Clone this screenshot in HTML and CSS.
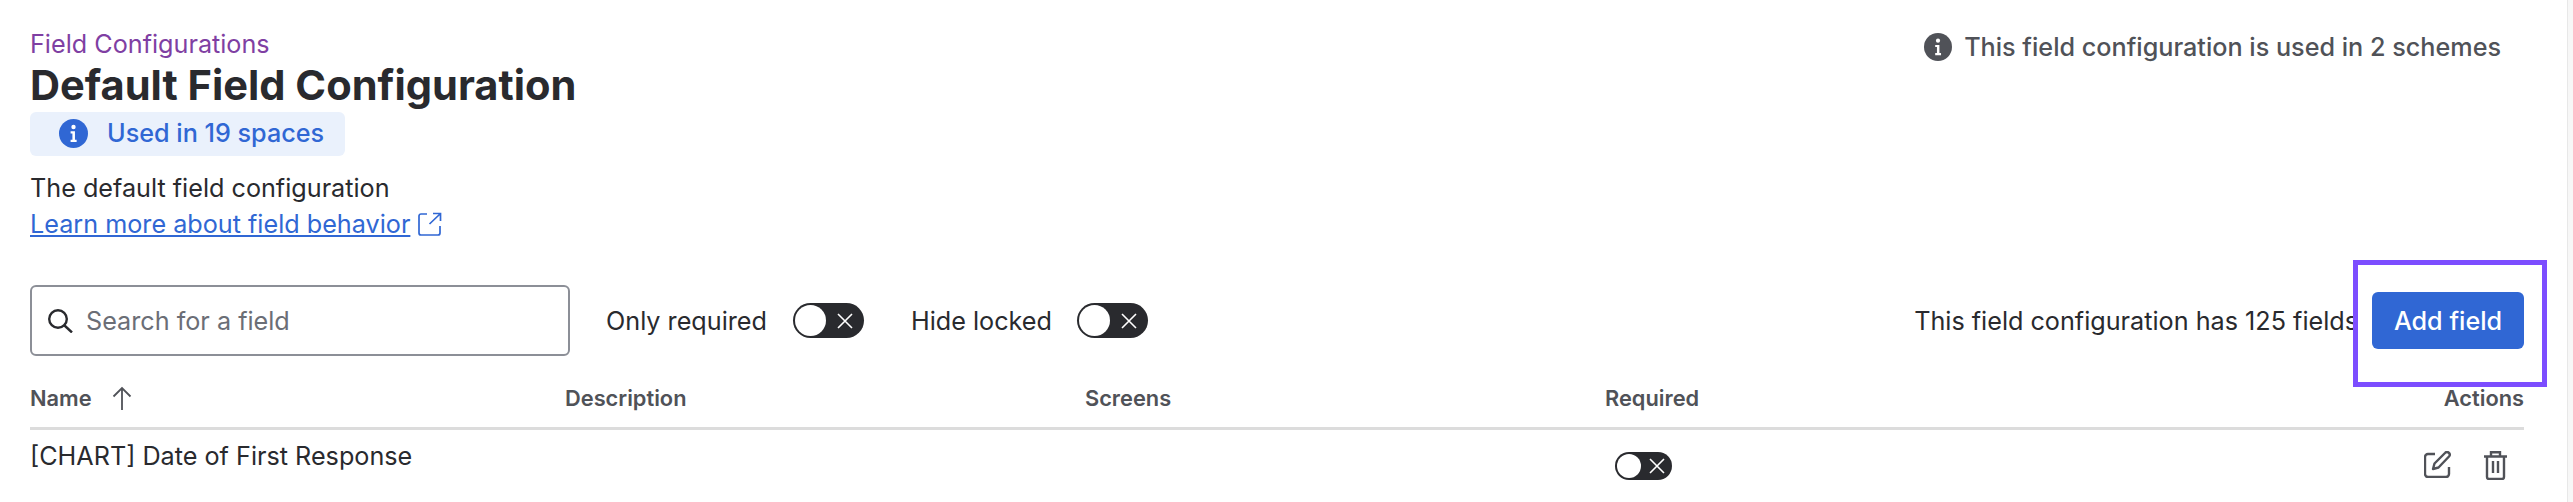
FILE: index.html
```html
<!DOCTYPE html>
<html lang="en">
<head>
  <meta charset="UTF-8" />
  <title>Default Field Configuration</title>
  <link rel="stylesheet" href="styles.css">
</head>
<body>
<div class="page">
  <div class="top">
    <div class="intro">
      <a class="crumb">Field Configurations</a>
      <h1>Default Field Configuration</h1>
      <div class="chip">
        <svg class="chip-icon" viewBox="0 0 24 24"><circle cx="12" cy="12" r="12" fill="currentColor"/><circle cx="12" cy="6.6" r="1.8" fill="#fff"/><path d="M9.6 10.2h3.600v7h1.400v1.800H9.600v-1.800h1.500v-5.200H9.600z" fill="#fff"/></svg>
        <span>Used in 19 spaces</span>
      </div>
      <p class="desc">The default field configuration</p>
      <a class="learn"><span>Learn more about field behavior</span>
        <svg class="ext" viewBox="0 0 24 24" fill="none" stroke="currentColor" stroke-width="1.7"><path d="M9 2H3a2 2 0 0 0-2 2v17a2 2 0 0 0 2 2h17a2 2 0 0 0 2-2v-7"/><path d="M15 1.500h7.500V9M22 2L11.500 12"/></svg>
      </a>
    </div>
    <div class="schemes">
      <svg class="schemes-icon" viewBox="0 0 24 24"><circle cx="12" cy="12" r="12" fill="currentColor"/><circle cx="12" cy="6.6" r="1.8" fill="#fff"/><path d="M9.6 10.2h3.600v7h1.400v1.800H9.600v-1.800h1.500v-5.200H9.600z" fill="#fff"/></svg>
      <span>This field configuration is used in 2 schemes</span>
    </div>
  </div>

  <div class="toolbar">
    <div class="search">
      <svg class="search-icon" viewBox="0 0 25 24" fill="none" stroke="#292a2e" stroke-width="2.4"><circle cx="10" cy="10" r="8.800"/><path d="M16.500 16.500L24 23.500"/></svg>
      <span>Search for a field</span>
    </div>
    <span class="filter">Only required</span>
    <span class="toggle"><i class="knob"></i><svg class="x" viewBox="0 0 16 16"><path d="M1 1l14 14M15 1L1 15"/></svg></span>
    <span class="filter second">Hide locked</span>
    <span class="toggle"><i class="knob"></i><svg class="x" viewBox="0 0 16 16"><path d="M1 1l14 14M15 1L1 15"/></svg></span>
    <span class="count">This field configuration has 125 fields</span>
    <button class="add">Add field</button>
    <div class="spotlight"></div>
  </div>

  <div class="table-row head">
    <div class="name-col">Name
      <svg class="sort" viewBox="0 0 20 24" fill="none" stroke="currentColor" stroke-width="1.8"><path d="M10 24V2M1.500 10.500L10 2l8.500 8.500"/></svg>
    </div>
    <div>Description</div>
    <div>Screens</div>
    <div>Required</div>
    <div class="actions-col">Actions</div>
  </div>
  <div class="table-row body-row">
    <div>[CHART] Date of First Response</div>
    <div></div>
    <div></div>
    <div class="req-cell"><span class="toggle small"><i class="knob"></i><svg class="x" viewBox="0 0 16 16"><path d="M1 1l14 14M15 1L1 15"/></svg></span></div>
    <div class="actions-col icons">
      <svg class="edit" viewBox="0 0 27 27" fill="none" stroke="#505258" stroke-width="2.4"><path d="M11 3H4a3 3 0 0 0-3 3v17a3 3 0 0 0 3 3h18a3 3 0 0 0 3-3v-7"/><path d="M9 18l1.500-5.500L21 2a2.400 2.400 0 0 1 4 3.500L14.500 16.500z" stroke-linejoin="round"/></svg>
      <svg class="trash" viewBox="0 0 23 29" fill="none" stroke="#505258" stroke-width="2.4"><path d="M0 5.500h23M7 5.500V1.300h9v4.200M3 5.500V26a2 2 0 0 0 2 2h13a2 2 0 0 0 2-2V5.500M9 10v12M14 10v12"/></svg>
    </div>
  </div>
</div>
</body>
</html>
```

FILE: styles.css
```css
* {
  box-sizing: border-box;
}

body {
  margin: 0;
  background: #f7f7f7;
  font-family: Inter, 'Noto Sans', sans-serif;
  font-size: 25.2px;
  color: #292a2e;
  overflow: hidden;
}

.page {
  width: 2568px;
  height: 502px;
  padding: 0 43px 0 30px;
  background: #fff;
  border-right: 1px solid #e8e8e8;
}

.top {
  display: flex;
  justify-content: space-between;
  align-items: flex-start;
  height: 260px;
  padding-top: 30px;
}

.crumb {
  display: block;
  color: #7f3fa3;
  line-height: 29px;
}

h1 {
  margin: 0;
  font-size: 41.6px;
  font-weight: 700;
  line-height: 53px;
}

.chip {
  display: flex;
  align-items: center;
  gap: 19px;
  width: 315px;
  height: 44px;
  padding-left: 29px;
  padding-bottom: 2px;
  background: #eaf1fc;
  border-radius: 6px;
  color: #3067d4;
  font-weight: 500;
}

.chip-icon {
  width: 29px;
  height: 29px;
}

.desc {
  margin: 14px 0 0;
  line-height: 36px;
}

.learn {
  display: flex;
  align-items: center;
  gap: 8px;
  color: #3067d4;
  line-height: 36px;
}

.learn span {
  text-decoration: underline;
  text-underline-offset: 2px;
}

.ext {
  width: 24px;
  height: 24px;
}

.schemes {
  display: flex;
  align-items: center;
  gap: 12px;
  padding-right: 23px;
  line-height: 34px;
  color: #505258;
  font-weight: 500;
}

.schemes-icon {
  width: 28px;
  height: 28px;
}

.toolbar {
  position: relative;
  display: flex;
  align-items: center;
  height: 121px;
}

.search {
  display: flex;
  align-items: center;
  gap: 13px;
  width: 540px;
  height: 71px;
  padding-left: 16px;
  border: 2px solid #8c8f97;
  border-radius: 6px;
  color: #6b6e76;
}

.search-icon {
  width: 25px;
  height: 24px;
}

.filter {
  margin-left: 36px;
  margin-right: 26px;
}

.filter.second {
  margin-left: 47px;
  margin-right: 25px;
}

.toggle {
  display: inline-flex;
  align-items: center;
  justify-content: space-between;
  width: 71px;
  height: 35px;
  padding: 0 11px 0 2px;
  background: #292a2e;
  border-radius: 18px;
}

.knob {
  width: 31px;
  height: 31px;
  background: #fff;
  border-radius: 50%;
}

.x {
  width: 16px;
  height: 16px;
  stroke: #fff;
  stroke-width: 1.6;
  fill: none;
}

.count {
  margin-left: auto;
  margin-right: 14px;
}

.add {
  width: 152px;
  height: 57px;
  border: none;
  border-radius: 6px;
  background: #3067d4;
  color: #fff;
  font: 500 25.2px Inter, sans-serif;
}

/* annotation frame around the button */
.spotlight {
  position: absolute;
  right: -23px;
  top: 0;
  width: 194px;
  height: 127px;
  border: 5px solid #7c4dff;
}

.table-row {
  display: grid;
  grid-template-columns: 535px 520px 520px 1fr 200px;
  align-items: center;
}

.head {
  height: 49px;
  padding-bottom: 12px;
  border-bottom: 3px solid #dcdcdc;
  color: #505258;
  font-size: 21.8px;
  font-weight: 600;
  line-height: 30px;
}

.name-col {
  display: flex;
  align-items: center;
  gap: 20px;
}

.sort {
  width: 20px;
  height: 24px;
}

.actions-col {
  text-align: right;
}

.body-row {
  align-items: start;
  padding-top: 8px;
  line-height: 36px;
}

.req-cell {
  display: flex;
  padding: 14px 0 0 10px;
}

.toggle.small {
  width: 57px;
  height: 28px;
  padding: 0 7px 0 2px;
}

.toggle.small .knob {
  width: 24px;
  height: 24px;
}

.icons {
  display: flex;
  justify-content: flex-end;
  gap: 33px;
  padding: 13px 17px 0 0;
}

.edit {
  width: 27px;
  height: 27px;
}

.trash {
  width: 23px;
  height: 29px;
}
```
